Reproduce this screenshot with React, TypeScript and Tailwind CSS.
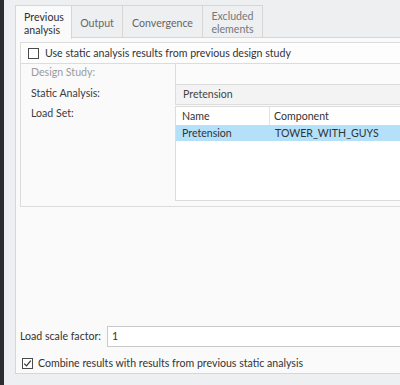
import React from "react";

function Check({ checked }: { checked?: boolean }) {
  return (
    <div className="w-[11px] h-[11px] border border-[#4a4a4a] bg-white shrink-0 flex items-center justify-center">
      {checked && (
        <svg width="9" height="9" viewBox="0 0 9 9">
          <path d="M1.2 4.6 L3.5 6.9 L7.8 1.6" fill="none" stroke="#333" strokeWidth="1.2" />
        </svg>
      )}
    </div>
  );
}

export default function App() {
  return (
    <div className="w-[400px] h-[385px] bg-[#eeeff1] flex overflow-hidden text-[10.6px] text-[#333] font-['Lato',sans-serif] leading-[13px] whitespace-nowrap">
      <div className="w-[4px] bg-[#2a2e31] shrink-0" />
      <div className="flex flex-col pl-[11px] pt-[5px] w-[396px] shrink-0">
        <div className="flex h-[33px] items-start">
          <div className="relative z-10 w-[57px] h-[34px] border border-b-0 border-[#d6d6d6] bg-[#fafafa] flex flex-col justify-center pl-[8px] pt-[2px] text-[#2f2f2f] leading-[13px]">
            <span>Previous</span>
            <span>analysis</span>
          </div>
          <div className="w-[51px] h-[33px] border-t border-r border-[#d6d6d6] flex items-center justify-center pt-[3px] text-[#666]">
            Output
          </div>
          <div className="w-[80px] h-[33px] border-t border-r border-[#d6d6d6] flex items-center justify-center pt-[3px] text-[#666]">
            Convergence
          </div>
          <div className="w-[60px] h-[33px] border-t border-r border-[#d6d6d6] flex flex-col items-center justify-center pt-[2px] text-[#777] leading-[13px]">
            <span>Excluded</span>
            <span>elements</span>
          </div>
        </div>
        <div className="-mt-px w-[400px] h-[337px] border border-r-0 border-[#d6d6d6] bg-[#fafafa] flex flex-col">
          <div className="mt-[4px] ml-[4px] h-[165px] border border-r-0 border-[#dcdcdc] flex flex-col">
            <div className="h-[21px] border-b border-[#dcdcdc] bg-[#fdfdfd] flex items-center pl-[7px] gap-[6px] text-[#333]">
              <Check />
              <span>Use static analysis results from previous design study</span>
            </div>
            <div className="flex">
              <div className="w-[154px] shrink-0 flex flex-col pl-[10px]">
                <div className="h-[17px] flex items-center text-[#9a9a9a]">Design Study:</div>
                <div className="h-[22px] flex items-center pt-[3px] text-[#3a3a3a]">Static Analysis:</div>
                <div className="h-[20px] flex items-center text-[#3a3a3a]">Load Set:</div>
              </div>
              <div className="flex-1 flex flex-col">
                <div className="h-[20px] border-l border-[#dcdcdc] bg-[#fbfbfb]" />
                <div className="h-[21px] border-t border-b border-l border-[#dcdcdc] bg-[#f3f3f3] flex items-center pl-[7px] text-[#444]">
                  Pretension
                </div>
                <div className="mt-px h-[95px] border border-r-0 border-[#dcdcdc] bg-white flex flex-col">
                  <div className="h-[18px] flex items-center text-[#333]">
                    <div className="w-[94px] h-full flex items-center pl-[6px] border-r border-[#e3e3e3]">Name</div>
                    <div className="pl-[4px]">Component</div>
                  </div>
                  <div className="h-[16px] bg-[#b4e0fa] flex items-center text-[#333]">
                    <div className="w-[95px] pl-[6px]">Pretension</div>
                    <div className="pl-[4px]">TOWER_WITH_GUYS</div>
                  </div>
                </div>
              </div>
            </div>
          </div>
          <div className="mt-[119px] h-[21px] flex items-stretch pl-[4px]">
            <div className="w-[87px] flex items-center text-[#333]">Load scale factor:</div>
            <div className="flex-1 border border-r-0 border-[#c9c9c9] bg-white flex items-center pl-[4px] text-[#333]">1</div>
          </div>
          <div className="mt-[10px] h-[13px] flex items-center pl-[6px] gap-[5px] text-[#333]">
            <Check checked />
            <span>Combine results with results from previous static analysis</span>
          </div>
        </div>
      </div>
    </div>
  );
}
